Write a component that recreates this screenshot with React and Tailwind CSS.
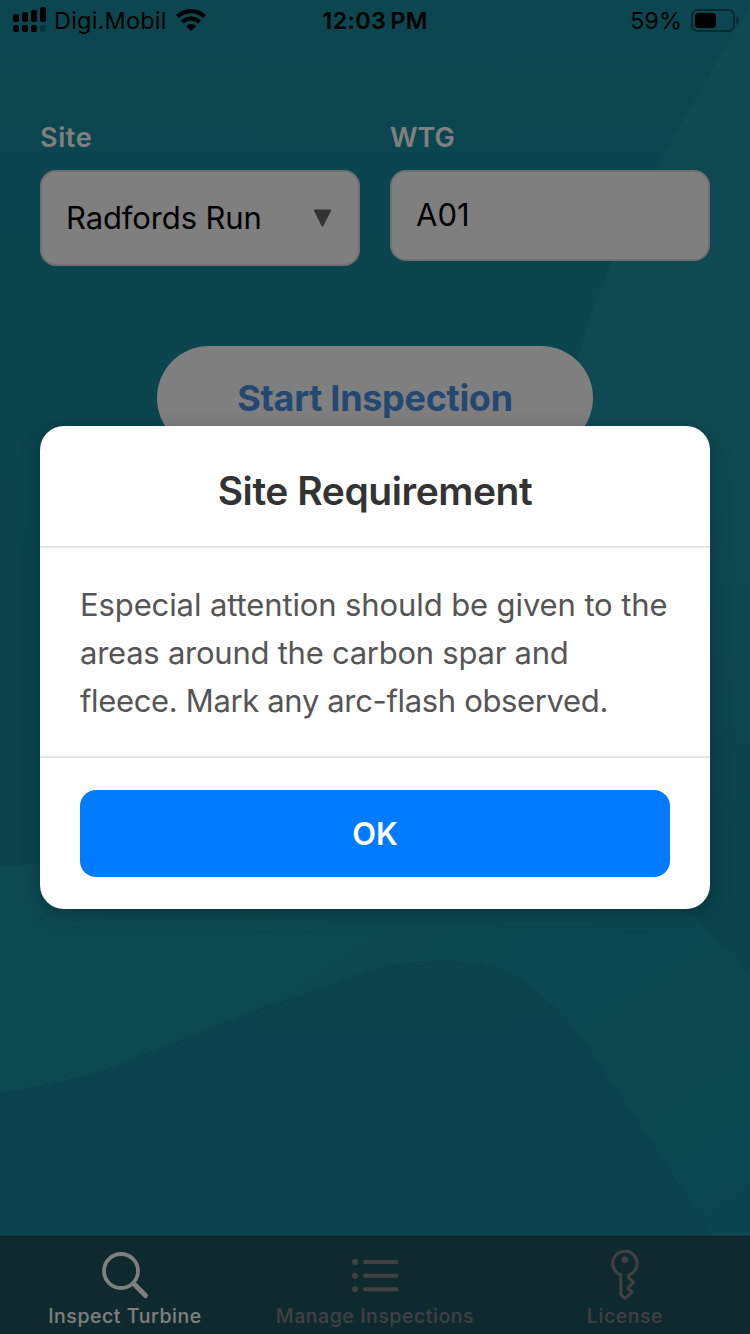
function Backdrop() {
  return (
    <svg className="absolute inset-0 h-full w-full" viewBox="0 0 750 1334" preserveAspectRatio="none" aria-hidden="true">
      <defs>
        <linearGradient id="base" x1="0" y1="0" x2="0" y2="1">
          <stop offset="0" stopColor="#188ca0" />
          <stop offset="0.3" stopColor="#168a9c" />
          <stop offset="0.65" stopColor="#16889a" />
          <stop offset="1" stopColor="#14869a" />
        </linearGradient>
        <linearGradient id="side" x1="0" y1="0" x2="0" y2="1">
          <stop offset="0" stopColor="#1e94a6" />
          <stop offset="0.5" stopColor="#1e94a6" />
          <stop offset="1" stopColor="#16889a" />
        </linearGradient>
        <linearGradient id="band" x1="0" y1="0" x2="1" y2="1">
          <stop offset="0" stopColor="#1c94a4" />
          <stop offset="1" stopColor="#168ca0" />
        </linearGradient>
      </defs>
      <rect width="750" height="1334" fill="url(#base)" />
      <path d="M750 8C730 38 712 70 697 97C683 121 670 143 657 168C640 199 625 230 612 262C598 296 587 322 580 352C560 440 600 680 750 860Z" fill="url(#side)" />
      <path d="M0 867C200 850 520 800 689 915C708 929 728 949 750 972V1334H754L713 1236L646 1133L598 1063C580 1032 570 1022 555 1007C520 972 490 960 447 960C420 960 404 962 383 967C360 972 340 980 316 990C285 1000 262 1007 234 1018C205 1029 178 1042 148 1052C124 1062 104 1071 77 1077C52 1084 26 1089 0 1092Z" fill="url(#band)" />
    </svg>
  );
}

function CellSignal() {
  return (
    <svg width="34" height="26" viewBox="0 0 34 26" fill="#000">
      <rect x="0" y="7" width="6" height="8" rx="2" />
      <rect x="9" y="5" width="6" height="10" rx="2" />
      <rect x="18" y="3" width="6" height="12" rx="2" />
      <rect x="27" y="0" width="6" height="15" rx="2" />
      <rect x="0" y="18" width="6" height="7" rx="2" />
      <rect x="9" y="18" width="6" height="7" rx="2" />
      <rect x="18" y="18" width="6" height="7" rx="2" />
      <rect x="27" y="18" width="6" height="7" rx="2" opacity="0.25" />
    </svg>
  );
}

function WifiGlyph() {
  return (
    <svg width="30" height="22" viewBox="0 0 30 22" fill="none" stroke="#000">
      <path d="M1.500 7.600C9 .3 21 .3 28.500 7.600" strokeWidth="4.200" />
      <path d="M6.300 13C11.400 8.200 18.600 8.200 23.700 13" strokeWidth="4" />
      <path d="M10 17.200C12.800 14.400 17.200 14.400 20 17.200L15 22Z" fill="#000" stroke="none" />
    </svg>
  );
}

function Battery() {
  return (
    <svg width="48" height="23" viewBox="0 0 48 23">
      <rect x="1" y="1" width="42" height="21" rx="5.500" fill="none" stroke="#000" strokeOpacity="0.4" strokeWidth="2" />
      <rect x="4" y="4" width="21" height="15" rx="3.500" fill="#000" />
      <path d="M45.500 7.500C48 8.500 48 14.500 45.500 15.500Z" fill="#000" fillOpacity="0.45" />
    </svg>
  );
}

function SearchGlyph() {
  return (
    <svg className="ml-0.5" width="48" height="48" viewBox="0 0 48 48" fill="none" stroke="currentColor" strokeLinecap="round">
      <circle cx="19" cy="19" r="17" strokeWidth="3.800" />
      <path d="M31.500 31.500L43.500 43.500" strokeWidth="5" />
    </svg>
  );
}

function ListGlyph() {
  return (
    <svg className="ml-0.5" width="48" height="48" viewBox="0 0 48 48" fill="currentColor">
      <circle cx="3" cy="10" r="3" />
      <circle cx="3" cy="23.700" r="3" />
      <circle cx="3" cy="37.300" r="3" />
      <rect x="11" y="8" width="35.500" height="4" rx="2" />
      <rect x="11" y="21.700" width="35.500" height="4" rx="2" />
      <rect x="11" y="35.300" width="35.500" height="4" rx="2" />
    </svg>
  );
}

function KeyGlyph() {
  return (
    <svg width="28" height="52" viewBox="0 0 28 52" fill="none" stroke="currentColor" strokeWidth="3" strokeLinejoin="round">
      <path d="M9.800 24.800A12.200 12.200 0 1 1 17.500 25V27.500L22.500 32.300L17.500 37V39L21 42L14 48.500L9.800 44.500Z" />
      <circle cx="14" cy="9.800" r="3.400" fill="currentColor" stroke="none" />
    </svg>
  );
}

function Tab({ label, active, children }) {
  return (
    <div className={active ? "flex flex-1 flex-col items-center text-white" : "flex flex-1 flex-col items-center text-[#848084]"}>
      <div className="flex h-[65px] items-end justify-center">
        <div className="flex h-[52px] items-center">{children}</div>
      </div>
      <span className="text-[19.500px] leading-7 font-medium tracking-[0.560px] whitespace-nowrap">{label}</span>
    </div>
  );
}

export default function App() {
  return (
    <div className="relative flex h-[1334px] w-[750px] flex-col overflow-hidden font-['Inter','Liberation_Sans',sans-serif] text-black">
      <Backdrop />

      <header className="relative grid h-10 grid-cols-3 items-center">
        <div className="flex items-center pl-[13px]">
          <CellSignal />
          <span className="ml-[7px] pt-px text-[23.500px] leading-none tracking-[0.200px]">Digi.Mobil</span>
          <span className="ml-[9px]"><WifiGlyph /></span>
        </div>
        <div className="pt-0.5 text-center text-[23.500px] leading-none font-semibold tracking-[0.300px]">12:03<span className="ml-1">PM</span></div>
        <div className="flex items-center justify-end pr-[11px]">
          <span className="mr-[9px] pt-0.5 text-[23.500px] leading-none">59%</span>
          <Battery />
        </div>
      </header>

      <main className="relative flex flex-1 flex-col px-10 pt-20">
        <div className="grid grid-cols-2 items-start gap-[30px]">
          <div>
            <div className="h-[50px] pt-px text-[27px] leading-[34px] font-semibold tracking-[0.600px] text-white">Site</div>
            <div className="flex h-24 items-center justify-between rounded-2xl border-2 border-[#e0dde0] bg-white pr-[26px] pl-6">
              <span className="text-[31px] tracking-[-0.120px]">Radfords Run</span>
              <svg width="19" height="19" viewBox="0 0 19 19" fill="#666" stroke="#666" strokeWidth="2" strokeLinejoin="round">
                <path d="M2 1.500H17L9.500 16.500Z" />
              </svg>
            </div>
          </div>
          <div>
            <div className="h-[50px] pt-px text-[27px] leading-[34px] font-semibold text-white">WTG</div>
            <div className="flex h-[91px] items-center rounded-2xl border-2 border-[#e0dde0] bg-white pl-6">
              <span className="text-[31px]">A01</span>
            </div>
          </div>
        </div>
        <button className="mt-20 flex h-[104px] w-[436px] items-center justify-center self-center rounded-full bg-white text-[36px] font-bold tracking-[-0.300px] text-[#4a90e2]">
          Start Inspection
        </button>
      </main>

      <nav className="relative flex h-[98px] border-t border-[#22343a] bg-[#1e545e]">
        <Tab label="Inspect Turbine" active><SearchGlyph /></Tab>
        <Tab label="Manage Inspections"><ListGlyph /></Tab>
        <Tab label="License"><KeyGlyph /></Tab>
      </nav>

      <div className="absolute inset-0 flex flex-col bg-black/50 px-10 pt-[426px]">
        <section className="rounded-3xl bg-white shadow-[0_4px_20px_rgba(0,0,0,0.25)]">
          <h1 className="flex h-[122px] items-center justify-center border-b-2 border-[#e5e5e5] pt-[10px] text-[39px] font-semibold tracking-[-0.450px] text-[#333]">
            Site Requirement
          </h1>
          <p className="flex h-[210px] flex-col border-b-2 border-[#e5e5e5] px-10 pt-[33px] text-[31px] leading-[48px] whitespace-nowrap text-[#555]">
            <span className="tracking-[-0.110px]">Especial attention should be given to the</span>
            <span className="tracking-[-0.250px]">areas around the carbon spar and</span>
            <span className="tracking-[-0.350px]">fleece. Mark any arc-flash observed.</span>
          </p>
          <div className="px-10 py-8">
            <button className="flex h-[87px] w-full items-center justify-center rounded-2xl bg-[#007aff] pt-0.5 text-[31px] font-semibold text-white">
              OK
            </button>
          </div>
        </section>
      </div>
    </div>
  );
}
